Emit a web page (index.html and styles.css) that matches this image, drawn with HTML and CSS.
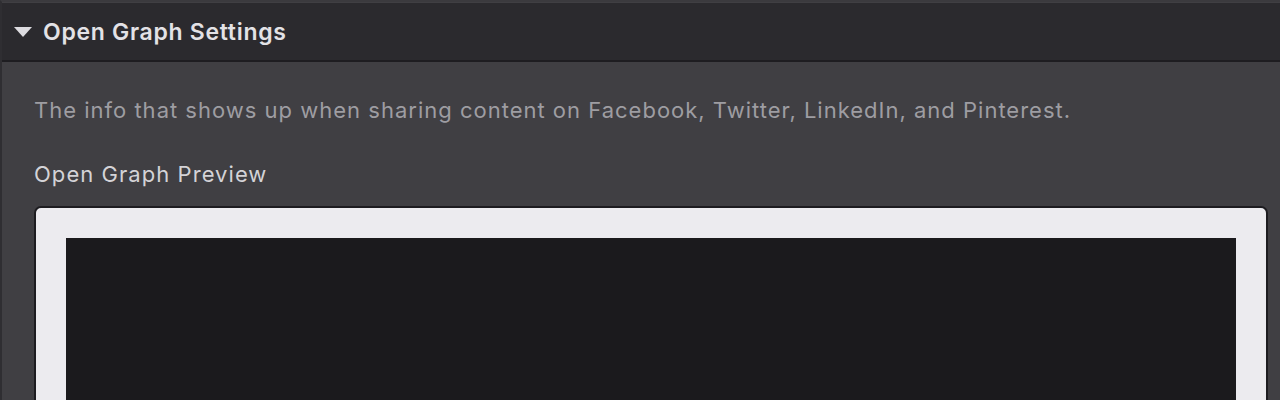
FILE: index.html
```html
<!DOCTYPE html>
<html>
<head>
<meta charset="utf-8">
<link rel="stylesheet" href="styles.css">
</head>
<body>
<div class="page">
  <div class="section-header">
    <svg class="caret" width="20" height="12" viewBox="0 0 20 12"><path d="M1 1 L19 1 L10 11 Z" fill="#dddce0"/></svg>
    <span class="title">Open Graph Settings</span>
  </div>
  <div class="section-body">
    <p class="desc">The info that shows up when sharing content on Facebook, Twitter, LinkedIn, and Pinterest.</p>
    <div class="label">Open Graph Preview</div>
    <div class="preview-card">
      <div class="preview-image"></div>
    </div>
  </div>
</div>
</body>
</html>
```
FILE: styles.css
```css
html, body {
  margin: 0;
  padding: 0;
  background: #403f43;
  height: 100%;
  overflow: hidden;
}
body {
  font-family: Inter, "Noto Sans", sans-serif;
}
.page {
  border-top: 2px solid #3b3a3e;
  border-left: 2px solid #2f2e32;
  min-height: 100%;
  box-sizing: border-box;
}
.section-header {
  height: 57px;
  margin-top: 1px;
  background: #2b2a2e;
  border-bottom: 2px solid #1e1d21;
  display: flex;
  align-items: center;
  padding-left: 11px;
  gap: 10px;
}
.caret {
  display: block;
  margin-top: 1px;
}
.title {
  color: #e3e2e6;
  font-weight: 600;
  font-size: 23px;
  letter-spacing: 0.7px;
}
.section-body {
  padding: 34px 12px 0 32px;
}
.desc {
  margin: 0;
  color: #9e9da2;
  font-size: 22px;
  letter-spacing: 1px;
  line-height: 28px;
}
.label {
  margin-top: 36px;
  color: #d4d3d7;
  font-size: 22px;
  letter-spacing: 1.05px;
  line-height: 28px;
}
.preview-card {
  margin-top: 18px;
  background: #ecebef;
  border: 2px solid #1d1c20;
  border-radius: 7px;
  padding: 30px 30px 0 30px;
  height: 300px;
}
.preview-image {
  background: #1b1a1d;
  height: 100%;
}
```
